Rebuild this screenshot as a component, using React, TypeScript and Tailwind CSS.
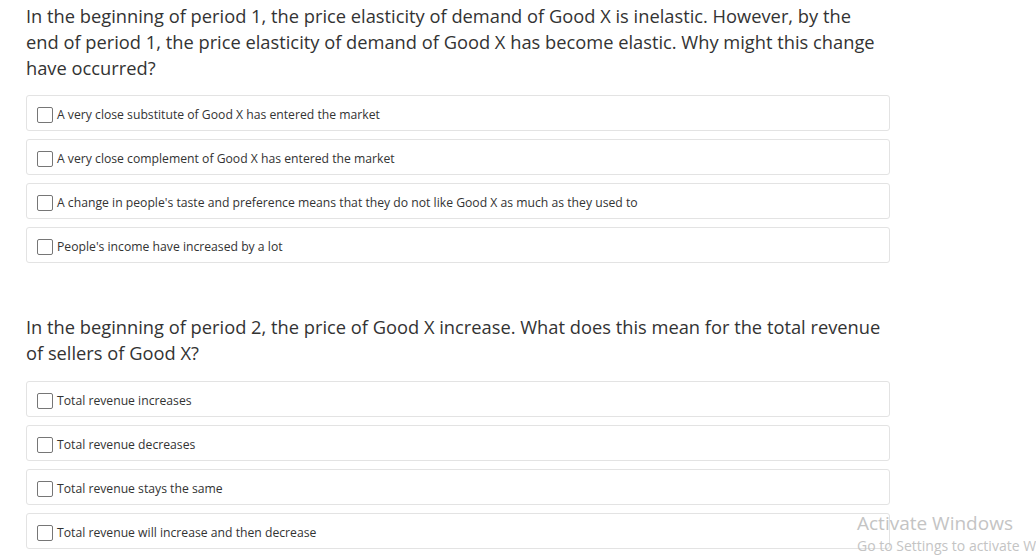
import React from "react";

const q1 = [
  "A very close substitute of Good X has entered the market",
  "A very close complement of Good X has entered the market",
  "A change in people's taste and preference means that they do not like Good X as much as they used to",
  "People's income have increased by a lot",
];
const q2 = [
  "Total revenue increases",
  "Total revenue decreases",
  "Total revenue stays the same",
  "Total revenue will increase and then decrease",
];

function Option({ text }: { text: string }) {
  return (
    <label className="flex h-[36px] items-center rounded-[3px] border border-[#e3e3e3] bg-white pl-[10px] pt-[4px]">
      <span className="h-[16px] w-[16px] shrink-0 rounded-[2px] border border-[#767676] bg-white" />
      <span className="ml-[4px] text-[12.2px] leading-[16px] text-[#333]">{text}</span>
    </label>
  );
}

function Question({ lines, options, gapTop }: { lines: string[]; options: string[]; gapTop: string }) {
  return (
    <div className="flex flex-col">
      <p className="text-[18.3px] leading-[26px] text-[#333]">
        {lines.map((l, i) => (
          <React.Fragment key={i}>
            {l}
            {i < lines.length - 1 && <br />}
          </React.Fragment>
        ))}
      </p>
      <div className={`${gapTop} flex flex-col gap-[8px]`}>
        {options.map((o) => (
          <Option key={o} text={o} />
        ))}
      </div>
    </div>
  );
}

export default function App() {
  return (
    <div
      className="relative h-[559px] w-[1036px] overflow-hidden bg-white"
      style={{ fontFamily: '"Open Sans", "Noto Sans", sans-serif' }}
    >
      <div className="flex w-[890px] flex-col gap-[51px] pl-[26px] pt-[3px]">
        <Question
          gapTop="mt-[14px]"
          lines={[
            "In the beginning of period 1, the price elasticity of demand of Good X is inelastic. However, by the",
            "end of period 1, the price elasticity of demand of Good X has become elastic. Why might this change",
            "have occurred?",
          ]}
          options={q1}
        />
        <Question
          gapTop="mt-[15px]"
          lines={[
            "In the beginning of period 2, the price of Good X increase. What does this mean for the total revenue",
            "of sellers of Good X?",
          ]}
          options={q2}
        />
      </div>
      <div className="pointer-events-none absolute left-[857px] top-[511px] whitespace-nowrap text-[#c4c4c4]">
        <div className="text-[19px] leading-[24px]">Activate Windows</div>
        <div className="mt-[1px] text-[14px] leading-[20px]">Go to Settings to activate Windows.</div>
      </div>
    </div>
  );
}
